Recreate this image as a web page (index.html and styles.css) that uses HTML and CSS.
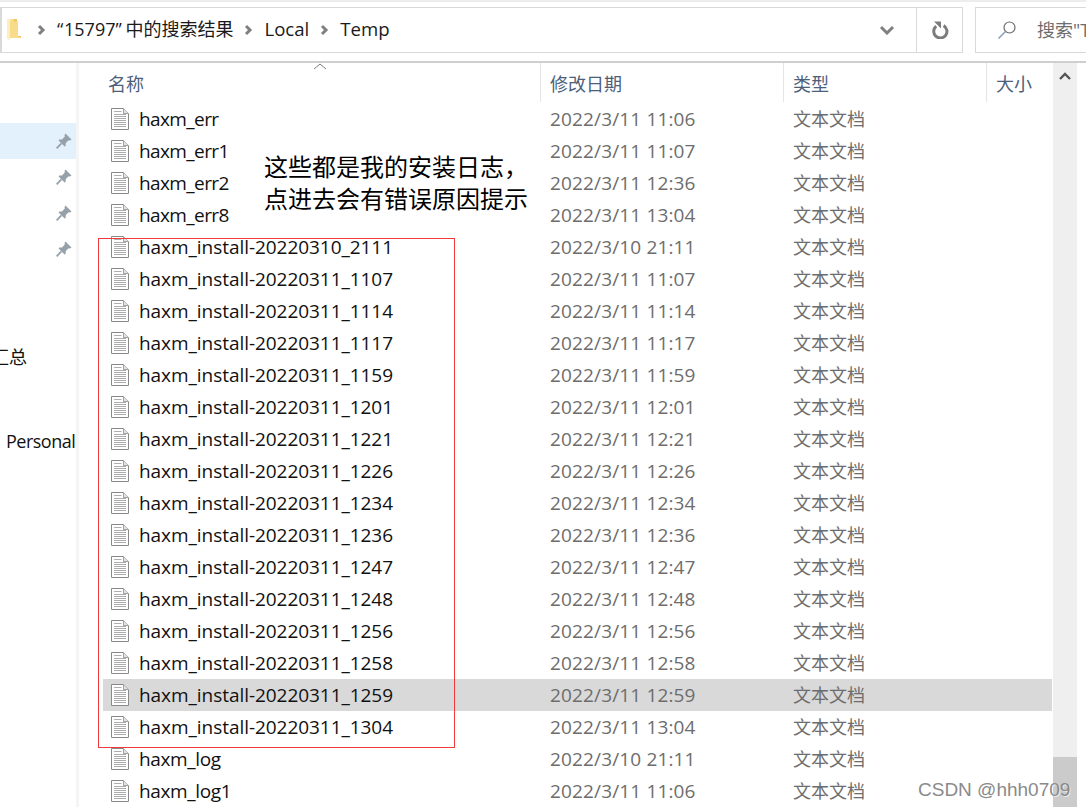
FILE: index.html
```html
<!DOCTYPE html>
<html lang="zh-CN">
<head>
<meta charset="utf-8">
<title>Temp</title>
<link rel="stylesheet" href="styles.css">
</head>
<body>
<svg class="sprite" width="0" height="0" aria-hidden="true">
  <symbol id="doc" viewBox="0 0 18 22">
    <path d="M.5.5H12.5L17.5 5.5V21.5H.5Z" fill="#fff" stroke="#8a8a8a"/>
    <path d="M12.5.5V5.5H17.5" fill="#e4e4e4" stroke="#a0a0a0"/>
    <path d="M3 3.5H10.5M3 6.5H15M3 8.5H15M3 10.5H15M3 12.5H15M3 14.5H15M3 16.5H15M3 18.5H15" stroke="#adadad" fill="none"/>
  </symbol>
  <symbol id="pin" viewBox="0 0 16 16">
    <path d="M9.5.5 15.5 6.5 14 7.5 12.6 7.2 9.8 10 9.6 13 8.6 13.6 2.6 7.6 3.2 6.6 6 6.4 8.8 3.6 8.5 2Z" fill="#96a0a8"/>
    <path d="M5.4 10.4.6 15.4" stroke="#96a0a8" stroke-width="1.8" fill="none"/>
  </symbol>
</svg>
<div class="window">
  <header class="toolbar">
    <div class="address">
      <svg class="folder" width="14" height="22" viewBox="0 0 14 22">
        <path d="M5 0H10V17H14V19H5Z" fill="#f2c65f"/>
        <path d="M0 0H7V3L11 2V18H14V19H3V21L0 19Z" fill="#f9dc8b"/>
        <path d="M0 0H4V1L3 2V21L0 19Z" fill="#fdeebd"/>
      </svg>
      <svg class="chev" width="9" height="12" viewBox="0 0 9 12"><path d="M2 2 6 6 2 10" fill="none" stroke="#808080" stroke-width="3"/></svg>
      <span class="crumb first"><span class="q">“</span>15797<span class="q">”</span><span class="cjk">中的搜索结果</span></span>
      <svg class="chev" width="9" height="12" viewBox="0 0 9 12"><path d="M2 2 6 6 2 10" fill="none" stroke="#808080" stroke-width="3"/></svg>
      <span class="crumb">Local</span>
      <svg class="chev" width="9" height="12" viewBox="0 0 9 12"><path d="M2 2 6 6 2 10" fill="none" stroke="#808080" stroke-width="3"/></svg>
      <span class="crumb">Temp</span>
      <svg class="drop" width="16" height="10" viewBox="0 0 16 10"><path d="M2 2 8 8 14 2" fill="none" stroke="#808080" stroke-width="3"/></svg>
      <div class="refresh">
        <svg width="18" height="18" viewBox="0 0 18 18"><path d="M5.2 5.2A6.6 6.6 0 1 0 12.6 4.6" fill="none" stroke="#7c7c7c" stroke-width="3"/><path d="M3 .6H10V7.6Z" fill="#7c7c7c"/></svg>
      </div>
    </div>
    <div class="search">
      <svg class="lens" width="20" height="20" viewBox="0 0 20 20"><circle cx="12.5" cy="7.5" r="5.5" fill="none" stroke="#6b6b6b" stroke-width="1.2"/><path d="M8.5 11.5 1.5 18.5" stroke="#8aa2bb" stroke-width="1.6"/></svg>
      <span class="search-text">搜索"Temp"</span>
    </div>
  </header>
  <div class="body">
    <nav class="sidebar">
      <div class="side-row selected"><svg class="pin"><use href="#pin"/></svg></div>
      <div class="side-row"><svg class="pin"><use href="#pin"/></svg></div>
      <div class="side-row"><svg class="pin"><use href="#pin"/></svg></div>
      <div class="side-row"><svg class="pin"><use href="#pin"/></svg></div>
      <div class="side-label summary"><span>数据汇总</span></div>
      <div class="side-label personal"><span>Personal</span></div>
    </nav>
    <main class="files">
      <div class="cols head">
        <div class="th">名称</div>
        <div class="th">修改日期</div>
        <div class="th">类型</div>
        <div class="th">大小</div>
      </div>
      <svg class="sort" width="14" height="7" viewBox="0 0 14 7"><path d="M1 6 7 1 13 6" fill="none" stroke="#7a7a7a"/></svg>
      <div class="cols row"><div class="name tight"><svg class="doc"><use href="#doc"/></svg>haxm_err</div><div class="date">2022/3/11 11:06</div><div class="type">文本文档</div></div>
      <div class="cols row"><div class="name tight"><svg class="doc"><use href="#doc"/></svg>haxm_err1</div><div class="date">2022/3/11 11:07</div><div class="type">文本文档</div></div>
      <div class="cols row"><div class="name tight"><svg class="doc"><use href="#doc"/></svg>haxm_err2</div><div class="date">2022/3/11 12:36</div><div class="type">文本文档</div></div>
      <div class="cols row"><div class="name tight"><svg class="doc"><use href="#doc"/></svg>haxm_err8</div><div class="date">2022/3/11 13:04</div><div class="type">文本文档</div></div>
      <div class="cols row"><div class="name"><svg class="doc"><use href="#doc"/></svg>haxm_install-20220310_2111</div><div class="date">2022/3/10 21:11</div><div class="type">文本文档</div></div>
      <div class="cols row"><div class="name"><svg class="doc"><use href="#doc"/></svg>haxm_install-20220311_1107</div><div class="date">2022/3/11 11:07</div><div class="type">文本文档</div></div>
      <div class="cols row"><div class="name"><svg class="doc"><use href="#doc"/></svg>haxm_install-20220311_1114</div><div class="date">2022/3/11 11:14</div><div class="type">文本文档</div></div>
      <div class="cols row"><div class="name"><svg class="doc"><use href="#doc"/></svg>haxm_install-20220311_1117</div><div class="date">2022/3/11 11:17</div><div class="type">文本文档</div></div>
      <div class="cols row"><div class="name"><svg class="doc"><use href="#doc"/></svg>haxm_install-20220311_1159</div><div class="date">2022/3/11 11:59</div><div class="type">文本文档</div></div>
      <div class="cols row"><div class="name"><svg class="doc"><use href="#doc"/></svg>haxm_install-20220311_1201</div><div class="date">2022/3/11 12:01</div><div class="type">文本文档</div></div>
      <div class="cols row"><div class="name"><svg class="doc"><use href="#doc"/></svg>haxm_install-20220311_1221</div><div class="date">2022/3/11 12:21</div><div class="type">文本文档</div></div>
      <div class="cols row"><div class="name"><svg class="doc"><use href="#doc"/></svg>haxm_install-20220311_1226</div><div class="date">2022/3/11 12:26</div><div class="type">文本文档</div></div>
      <div class="cols row"><div class="name"><svg class="doc"><use href="#doc"/></svg>haxm_install-20220311_1234</div><div class="date">2022/3/11 12:34</div><div class="type">文本文档</div></div>
      <div class="cols row"><div class="name"><svg class="doc"><use href="#doc"/></svg>haxm_install-20220311_1236</div><div class="date">2022/3/11 12:36</div><div class="type">文本文档</div></div>
      <div class="cols row"><div class="name"><svg class="doc"><use href="#doc"/></svg>haxm_install-20220311_1247</div><div class="date">2022/3/11 12:47</div><div class="type">文本文档</div></div>
      <div class="cols row"><div class="name"><svg class="doc"><use href="#doc"/></svg>haxm_install-20220311_1248</div><div class="date">2022/3/11 12:48</div><div class="type">文本文档</div></div>
      <div class="cols row"><div class="name"><svg class="doc"><use href="#doc"/></svg>haxm_install-20220311_1256</div><div class="date">2022/3/11 12:56</div><div class="type">文本文档</div></div>
      <div class="cols row"><div class="name"><svg class="doc"><use href="#doc"/></svg>haxm_install-20220311_1258</div><div class="date">2022/3/11 12:58</div><div class="type">文本文档</div></div>
      <div class="cols row active"><div class="name"><svg class="doc"><use href="#doc"/></svg>haxm_install-20220311_1259</div><div class="date">2022/3/11 12:59</div><div class="type">文本文档</div></div>
      <div class="cols row"><div class="name"><svg class="doc"><use href="#doc"/></svg>haxm_install-20220311_1304</div><div class="date">2022/3/11 13:04</div><div class="type">文本文档</div></div>
      <div class="cols row"><div class="name tight-log"><svg class="doc"><use href="#doc"/></svg>haxm_log</div><div class="date">2022/3/10 21:11</div><div class="type">文本文档</div></div>
      <div class="cols row"><div class="name tight-log"><svg class="doc"><use href="#doc"/></svg>haxm_log1</div><div class="date">2022/3/11 11:06</div><div class="type">文本文档</div></div>
    </main>
    <aside class="scrollbar">
      <svg class="up" width="14" height="10" viewBox="0 0 14 10"><path d="M2 8 7 3 12 8" fill="none" stroke="#555" stroke-width="2.4"/></svg>
      <div class="thumb"></div>
    </aside>
  </div>
</div>
<div class="highlight"></div>
<p class="note">这些都是我的安装日志，<br>点进去会有错误原因提示</p>
<div class="watermark">CSDN @hhh0709</div>
</body>
</html>
```
FILE: styles.css
```css
* { box-sizing: border-box; }
html, body { margin: 0; height: 100%; overflow: hidden; background: #fff; }
body {
  position: relative;
  font-family: "Open Sans", "Noto Sans CJK SC", sans-serif;
  font-size: 19px;
  color: #111;
}
.sprite { position: absolute; }
.window { display: flex; flex-direction: column; height: 807px; border-top: 2px solid #ededed; }

.toolbar {
  height: 61px;
  flex: none;
  display: flex;
  gap: 12px;
  padding-top: 5px;
  border-bottom: 2px solid #cfcfcf;
  padding-bottom: 8px;
}
.address {
  width: 963px;
  height: 46px;
  flex: none;
  display: flex;
  align-items: center;
  border: 1px solid #d9d9d9;
  border-left-width: 2px;
  padding-left: 5px;
}
.folder { margin-right: 16px; flex: none; }
.chev { margin-right: 11px; flex: none; }
.crumb { margin-right: 11px; padding-bottom: 4px; font-size: 18.6px; color: #1a1a1a; white-space: nowrap; }
.crumb.first { font-size: 18px; }
.q { display: inline-block; width: 7px; }
.q + .cjk { margin-left: 3px; }
.drop { margin-left: auto; margin-right: 21px; }
.refresh {
  width: 46px;
  height: 100%;
  display: flex;
  align-items: center;
  justify-content: center;
  border-left: 1px solid #d9d9d9;
}
.search {
  flex: 1;
  height: 46px;
  display: flex;
  align-items: center;
  gap: 20px;
  padding-left: 21px;
  border: 1px solid #d9d9d9;
  border-right: 0;
  overflow: hidden;
  white-space: nowrap;
}
.lens { flex: none; }
.search-text { font-size: 18px; color: #6d6d6d; padding-bottom: 2px; }

.body { flex: 1; display: flex; min-height: 0; }
.sidebar {
  width: 79px;
  flex: none;
  padding-top: 60px;
  border-right: 3px solid #f5f5f5;
  overflow: hidden;
}
.side-row {
  height: 36px;
  display: flex;
  align-items: center;
  justify-content: flex-end;
  padding-right: 4px;
}
.side-row.selected { background: #e3f1fd; }
.pin { width: 16px; height: 16px; }
.side-label { white-space: nowrap; font-size: 18px; color: #111; display: flex; height: 36px; align-items: center; }
.summary { margin-top: 72px; width: 27px; justify-content: flex-end; overflow: hidden; padding-bottom: 2px; }
.summary span { flex: none; }
.personal { margin-top: 48px; padding-left: 6px; letter-spacing: -.5px; }

.files { position: relative; width: 974px; flex: none; padding: 0 0 0 24px; overflow: hidden; }
.cols { display: grid; grid-template-columns: 438px 243px 203px 65px; width: 949px; }
.head { height: 40px; }
.th {
  padding-left: 9px;
  height: 39px;
  display: flex;
  align-items: center;
  color: #4c607a;
  font-size: 18px;
  border-right: 1px solid #e5e5e5;
}
.th:first-child { padding-left: 5px; }
.th:last-child { border-right: 0; }
.sort { position: absolute; left: 234px; top: 0; }
.row { height: 32px; align-items: center; }
.row.active { background: #d9d9d9; }
.name { display: flex; align-items: center; padding-left: 8px; white-space: nowrap; letter-spacing: -.05px; }
.tight { letter-spacing: -.6px; }
.tight-log { letter-spacing: -.35px; }
.doc { width: 18px; height: 22px; margin-right: 10px; flex: none; }
.date, .type { padding-left: 9px; color: #6d6d6d; white-space: nowrap; }
.date { font-size: 19px; letter-spacing: .15px; }
.type { font-size: 18px; padding-bottom: 2px; }

.scrollbar {
  position: relative;
  width: 24px;
  flex: none;
  background: #efefef;
  display: flex;
  flex-direction: column;
  align-items: center;
  justify-content: space-between;
  padding-top: 8px;
}
.thumb { width: 100%; height: 50px; background: #cbcbcb; }

.highlight { position: absolute; left: 98px; top: 238px; width: 357px; height: 510px; border: 1px solid #f03a3a; }
.note { position: absolute; left: 264px; top: 150px; margin: 0; font-size: 24px; line-height: 32px; color: #000; font-family: "Noto Sans CJK SC", sans-serif; }
.watermark { position: absolute; left: 918px; top: 779px; font-size: 19px; font-family: "Liberation Sans", sans-serif; color: #8a8a8a; white-space: nowrap; text-shadow: 1px 1px 0 rgba(255,255,255,.6); }
```
